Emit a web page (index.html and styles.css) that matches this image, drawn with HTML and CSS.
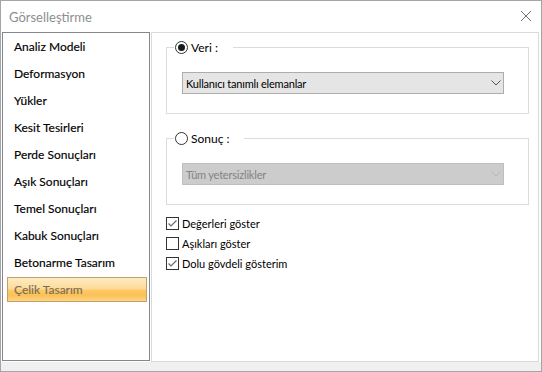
FILE: index.html
```html
<!DOCTYPE html>
<html lang="tr">
<head>
  <meta charset="UTF-8" />
  <title>Görselleştirme</title>
  <link rel="stylesheet" href="styles.css">
</head>
<body>
  <div class="window">

    <!-- Title bar -->
    <div class="titlebar">
      <span class="title">Görselleştirme</span>
      <svg class="close" width="12" height="12" viewBox="0 0 12 12">
        <path d="M1 1 L11 11 M11 1 L1 11" stroke="#6e6e6e" stroke-width="1" fill="none" />
      </svg>
    </div>

    <div class="content">
      <!-- Category list -->
      <div class="list">
        <div class="item">Analiz Modeli</div>
        <div class="item">Deformasyon</div>
        <div class="item">Yükler</div>
        <div class="item">Kesit Tesirleri</div>
        <div class="item">Perde Sonuçları</div>
        <div class="item">Aşık Sonuçları</div>
        <div class="item">Temel Sonuçları</div>
        <div class="item">Kabuk Sonuçları</div>
        <div class="item">Betonarme Tasarım</div>
        <div class="item selected">Çelik Tasarım</div>
      </div>

      <!-- Options -->
      <div class="panel">
        <div class="group">
          <div class="legend">
            <span class="radio checked"></span>
            <span>Veri :</span>
          </div>
          <div class="combo">
            <span>Kullanıcı tanımlı elemanlar</span>
            <svg width="10" height="6" viewBox="0 0 10 6"><path d="M0.5 0.5 L5 5 L9.5 0.5" stroke="#555" fill="none" /></svg>
          </div>
        </div>

        <div class="group second">
          <div class="legend">
            <span class="radio"></span>
            <span>Sonuç :</span>
          </div>
          <div class="combo disabled">
            <span>Tüm yetersizlikler</span>
            <svg width="10" height="6" viewBox="0 0 10 6"><path d="M0.5 0.5 L5 5 L9.5 0.5" stroke="#b4b4b4" fill="none" /></svg>
          </div>
        </div>

        <div class="checks">
          <div class="check-row">
            <svg class="box" width="13" height="13" viewBox="0 0 13 13">
              <rect x="0.5" y="0.5" width="12" height="12" fill="#fff" stroke="#333" />
              <path d="M2.5 6.5 L5 9 L10.5 3.5" stroke="#6a6a6a" stroke-width="1.2" fill="none" />
            </svg>
            <span>Değerleri göster</span>
          </div>
          <div class="check-row">
            <svg class="box" width="13" height="13" viewBox="0 0 13 13">
              <rect x="0.5" y="0.5" width="12" height="12" fill="#fff" stroke="#333" />
            </svg>
            <span>Aşıkları göster</span>
          </div>
          <div class="check-row">
            <svg class="box" width="13" height="13" viewBox="0 0 13 13">
              <rect x="0.5" y="0.5" width="12" height="12" fill="#fff" stroke="#333" />
              <path d="M2.5 6.5 L5 9 L10.5 3.5" stroke="#6a6a6a" stroke-width="1.2" fill="none" />
            </svg>
            <span>Dolu gövdeli gösterim</span>
          </div>
        </div>
      </div>
    </div>

    <div class="footer"></div>
  </div>
</body>
</html>
```

FILE: styles.css
```css
body {
  margin: 0;
  font-family: Lato, "Noto Sans", sans-serif;
  font-size: 11px;
  color: #000;
}
.window {
  width: 542px;
  height: 372px;
  box-sizing: border-box;
  border: 1px solid #a5a5a5;
  background: #fff;
  display: flex;
  flex-direction: column;
}
.titlebar {
  height: 31px;
  flex: none;
  display: flex;
  align-items: center;
  justify-content: space-between;
  padding: 0 9px 0 8px;
}
.title {
  color: #8e8e8e;
  font-size: 13px;
}
.close {
  margin-top: -1px;
}
.content {
  height: 330px;
  flex: none;
  display: flex;
  align-items: flex-start;
  padding-left: 1px;
  gap: 1px;
}
.list {
  width: 148px;
  height: 329px;
  box-sizing: border-box;
  border: 1px solid #828790;
  padding: 1px 2px 0 4px;
}
.item {
  height: 25px;
  line-height: 23px;
  margin-bottom: 2px;
  padding-left: 6px;
  box-sizing: border-box;
  border: 1px solid transparent;
  font-size: 12px;
  color: #000;
  -webkit-text-stroke: 0.15px #000;
}
.item.selected {
  border-color: #c2a26a;
  color: #7d6c58;
  -webkit-text-stroke: 0.15px #7d6c58;
  background: linear-gradient(#fdebc3 0%, #fddc9a 45%, #fcc862 55%, #fbc157 75%, #fdd486 100%);
}
.panel {
  width: 388px;
  height: 330px;
  box-sizing: border-box;
  border: 1px solid #dadada;
  padding: 14px 9px 0 14px;
}
.group {
  position: relative;
  height: 67px;
  box-sizing: border-box;
  border: 1px solid #dcdcdc;
  padding: 24px 0 0 15px;
}
.group.second {
  margin-top: 24px;
}
.legend {
  position: absolute;
  left: 7px;
  top: -9px;
  height: 16px;
  display: flex;
  align-items: center;
  gap: 3px;
  padding: 0 15px 0 1px;
  background: #fff;
  font-size: 12px;
}
.radio {
  width: 13px;
  height: 13px;
  box-sizing: border-box;
  border: 1px solid #333;
  border-radius: 50%;
  background: #fff;
  position: relative;
}
.radio.checked::after {
  content: "";
  position: absolute;
  left: 2px;
  top: 2px;
  width: 7px;
  height: 7px;
  border-radius: 50%;
  background: #1a1a1a;
}
.combo {
  width: 322px;
  height: 22px;
  box-sizing: border-box;
  border: 1px solid #adadad;
  background: #e5e5e5;
  display: flex;
  align-items: center;
  justify-content: space-between;
  padding: 0 2px 0 3px;
  font-size: 11px;
  letter-spacing: -0.2px;
}
.combo.disabled {
  background: #cccccc;
  border-color: #bfbfbf;
  color: #838383;
}
.checks {
  margin-top: 8px;
  display: flex;
  flex-direction: column;
}
.check-row {
  height: 20px;
  display: flex;
  align-items: center;
  gap: 3px;
}
.footer {
  flex: 1;
  background: #f0f0f0;
}
```
